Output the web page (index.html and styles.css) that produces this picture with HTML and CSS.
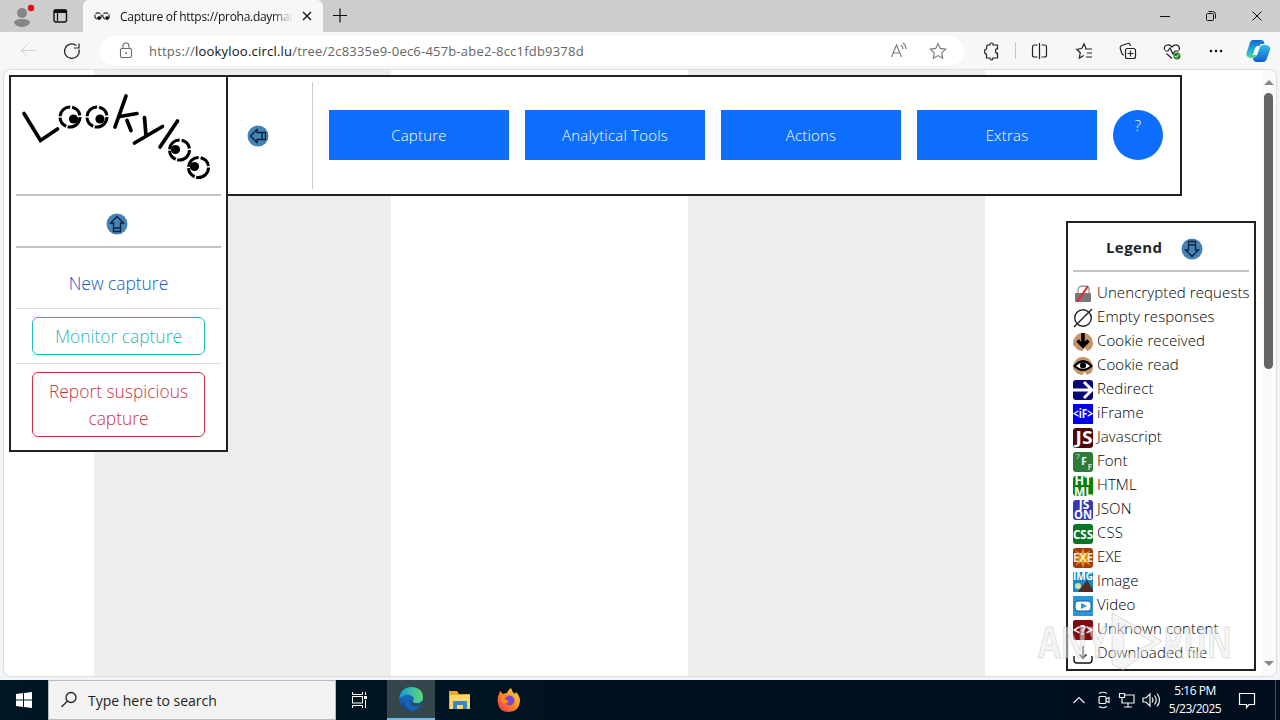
FILE: index.html
```html
<!DOCTYPE html>
<html lang="en">
<head>
<meta charset="utf-8">
<title>Capture of https://proha.daymar</title>
<link rel="stylesheet" href="styles.css">
</head>
<body>
<header class="tabstrip">
  <svg class="profile" width="82" height="32" viewBox="0 0 82 32"><circle cx="22" cy="13" r="5" fill="#858585"/><path d="M14 23q0-4 8-4t8 4q-3 4-8 4t-8-4" fill="#858585"/><circle cx="31" cy="8" r="3.2" fill="#e00b16"/><rect x="54" y="10" width="12.5" height="12" rx="2" fill="none" stroke="#111" stroke-width="1.4"/><path d="M54.500 10h11.500v2.500H54.500zM57.500 13v8" fill="#111" stroke="#111" stroke-width="1.200"/></svg>
  <div class="tab">
    <svg width="18" height="14" viewBox="0 0 18 14"><g fill="none" stroke="#333" stroke-width="1.300"><circle cx="5" cy="7" r="3.200" stroke-dasharray="5 1"/><circle cx="13" cy="7" r="3.200" stroke-dasharray="5 1"/></g><circle cx="6" cy="9" r="1.800"/><circle cx="14" cy="9" r="1.800"/></svg>
    <span class="tab-title">Capture of https://proha.daymar</span>
    <svg width="10" height="10" viewBox="0 0 10 10"><path d="M1 1l8 8M9 1l-8 8" stroke="#111" stroke-width="1.300"/></svg>
  </div>
  <svg class="plus" width="16" height="16" viewBox="0 0 16 16"><path d="M1 7.500h14M8 .5v14" stroke="#111" stroke-width="1.200"/></svg>
  <svg class="winbuttons" width="120" height="32" viewBox="0 0 120 32" fill="none" stroke="#111"><path d="M0 16.500h10M92.500 11.500l9 9M101.500 11.500l-9 9"/><rect x="46.500" y="13.500" width="7" height="7" rx="1"/><path d="M48.500 11.500h4q3 0 3 3v4"/></svg>
</header>
<div class="toolbar">
  <svg width="100" height="38" viewBox="0 0 100 38" fill="none"><path d="M36 18.500H21M27.500 12.500l-6.500 6 6.500 6" stroke="#d0d0d0"/><path d="M79 17.500A7.300 7.300 0 1 1 76.500 13.500M79 11.500v4.500h-5" stroke="#222" stroke-width="1.200"/></svg>
  <div class="address">
    <svg width="14" height="18" viewBox="0 0 14 18"><rect x="1.500" y="6.500" width="11" height="9" rx="1.500" fill="none" stroke="#666" stroke-width="1.100"/><path d="M4 6V4q0-3 3-3t3 3v2" fill="none" stroke="#666" stroke-width="1.100"/><circle cx="7" cy="11" r=".8"/></svg>
    <span class="url">https://<b>lookyloo.circl.lu</b>/tree/2c8335e9-0ec6-457b-abe2-8cc1fdb9378d</span>
    <svg class="address-icons" width="62" height="20" viewBox="0 0 62 20" fill="none" stroke="#777" stroke-width="1.100"><path d="M1.500 16L6.500 4l5 12M3.500 12h6M11 4q2 1.500 2 4M13 2q3 2 3 6"/><path d="M48 2.500l2.300 4.900 5.400.7-4 3.800 1 5.300-4.700-2.600-4.700 2.600 1-5.300-4-3.800 5.400-.7z"/></svg>
  </div>
  <svg class="actions" width="304" height="38" viewBox="976 32 304 38" fill="none" stroke="#222" stroke-width="1.200">
    <path d="M987 45h3q-.5-2 1.500-2t1.500 2h4.500v4q-2-.5-2 2t2 2v5h-4.500q0 2-1.500 2t-1.500-2h-3.500v-4q-2 0-2-2.500t2-2.500z"/>
    <path d="M1015.500 42v17" stroke="#c5c5c5" stroke-width="1"/>
    <path d="M1037.500 45h-3q-2 0-2 2v8q0 2 2 2h3M1041.500 45h3q2 0 2 2v8q0 2-2 2h-3M1039.500 43v16"/>
    <path d="M1086 48.500l-2-4.500-2.300 4.500-5 .8 3.600 3.400-1 5.300 4.500-2.500M1085 49h7M1087 53h5M1086 57h6"/>
    <rect x="1125.500" y="48.500" width="10" height="10" rx="2"/><path d="M1130.500 50.500v6M1127.500 53.500h6M1124 55q-2 0-2.300-2l-1.500-5q-.3-1.700 1.500-2.500l6-2q2-.5 3 2.500"/>
    <path d="M1164.500 50q-1-4 2.500-5 3-.8 5 2 3-3.500 6-1.500 2 1.500 1.200 4.500M1165 51h3l2-3 3 6 2-3h4M1166.500 53.500l5.500 5"/><circle cx="1177" cy="56" r="3.500" fill="#218321" stroke="none"/><path d="M1175 56l1.300 1.500 2.500-3" stroke="#fff" stroke-width="1"/>
    <g fill="#111" stroke="none"><circle cx="1211" cy="51" r="1.300"/><circle cx="1216" cy="51" r="1.300"/><circle cx="1221" cy="51" r="1.300"/></g>
    <defs><linearGradient id="cp1" x2="0" y2="1"><stop stop-color="#1764cc"/><stop offset=".5" stop-color="#21a6df"/><stop offset="1" stop-color="#58d592"/></linearGradient><linearGradient id="cp2" x2="0" y2="1"><stop stop-color="#2ac0e8"/><stop offset="1" stop-color="#155cd0"/></linearGradient></defs>
    <path d="M1253 40h8q3 0 3.500 4h-4l-4 12q-1 2-3 2h-3q-5-1-4-5l3-9q1-4 3.500-4" fill="url(#cp1)" stroke="none"/><path d="M1263 45h3q5 1 4 5l-3 8q-1 4-4 4h-7q-3-1-3-4 3 0 4-3l3-8q1-2 3-2" fill="url(#cp2)" stroke="none"/><path d="M1257 46h3l-3 9h-4l2-7z" fill="#fff" stroke="none"/>
  </svg>
</div>
<main class="viewport">
  <div class="bands"><i></i><i></i></div>
  <section class="menu">
    <div class="panel side">
      <svg class="logo" width="205" height="112" viewBox="16 81 205 112" fill="none" stroke="#000" stroke-width="3.700">
        <path d="M24 113.500L40.500 140.500L57.500 129" stroke-linecap="round"/>
        <g stroke-width="3" stroke-dasharray="18 1.500 11 1.500 15 2 11.830 2"><circle cx="70" cy="117" r="10"/><circle cx="97" cy="117" r="10"/><circle cx="179.500" cy="150" r="10"/><circle cx="198.500" cy="167.500" r="10"/></g>
        <g fill="#000" stroke="none"><circle cx="73.500" cy="119" r="4.600"/><circle cx="100" cy="119" r="4.600"/><circle cx="175.500" cy="149.500" r="4.600"/><circle cx="194.500" cy="166.500" r="4.600"/></g>
        <path d="M126 96l-11 31M120 116.500l17-3M127 120.500l4 10M144.500 117.500l1.500 18M162.500 126.500l-28 16.500M177.500 121l-17.500 26" stroke-linecap="round"/>
      </svg>
      <div class="collapse"><svg width="22" height="24" viewBox="0 0 22 24"><circle cx="11" cy="12" r="10.500" fill="#4682b4"/><path d="M11 4.500l6.500 6.500h-3v5h-7v-5h-3zM7.500 16h7v3.500h-7z" fill="none" stroke="#0a223b" stroke-width="1.300"/></svg></div>
      <div class="item first">New capture</div>
      <div class="item"><span class="btn cyan">Monitor capture</span></div>
      <div class="item last"><span class="btn red">Report suspicious capture</span></div>
    </div>
    <nav class="panel topnav">
      <div class="back"><svg width="24" height="22" viewBox="0 0 24 22"><circle cx="12" cy="11" r="10.500" fill="#4682b4"/><path d="M4.500 11l6.500-6.500v3h5v7h-5v3zM16 7.500h3.500v7H16z" fill="none" stroke="#0a223b" stroke-width="1.300"/></svg></div>
      <div class="nav-btn">Capture</div><div class="nav-btn">Analytical Tools</div><div class="nav-btn">Actions</div><div class="nav-btn">Extras</div>
      <div class="help">?</div>
    </nav>
  </section>
  <aside class="panel legend">
    <div class="legend-head"><b>Legend</b><svg width="22" height="24" viewBox="0 0 22 24"><circle cx="11" cy="12" r="10.500" fill="#4682b4"/><path d="M11 19.500l6.500-6.500h-3V8h-7v5h-3zM7.500 4.500h7V8h-7z" fill="none" stroke="#0a223b" stroke-width="1.300"/></svg></div>
    <ul>
      <li><svg class="ic" viewBox="0 0 20 20"><path d="M5 9V6q0-4 5.500-4T16 6v3" fill="none" stroke="#999" stroke-width="1.300"/><rect x="2" y="9" width="16" height="9" rx="1" fill="#777"/><path d="M4 18L15 2" stroke="#ef2335" stroke-width="2"/></svg><span>Unencrypted requests</span></li>
      <li><svg class="ic" viewBox="0 0 20 20"><circle cx="10" cy="10" r="8.300" fill="none" stroke="#212529" stroke-width="1.400"/><path d="M1 19L19 1" stroke="#212529" stroke-width="1.400"/></svg><span>Empty responses</span></li>
      <li><svg class="ic" viewBox="0 0 20 20"><path d="M0 13q-1-6 5-11 8-3 13 3 4 7 0 12l-4 2-2-3-3 3-4-1z" fill="#c69468"/><path d="M10 1v13M4.500 8.500L10 14l5.500-5.500" fill="none" stroke="#000" stroke-width="3.500"/></svg><span>Cookie received</span></li>
      <li><svg class="ic" viewBox="0 0 20 20"><path d="M0 13q-1-6 5-11 8-3 13 3 4 7 0 12l-4 2-2-3-3 3-4-1z" fill="#c69468"/><path d="M0 10q10-12 20 0-10 10-20 0" fill="#000"/><path d="M3 10q7-7 14 0-7 6-14 0" fill="#fff"/><circle cx="10" cy="9.500" r="3"/></svg><span>Cookie read</span></li>
      <li><svg class="ic" viewBox="0 0 20 20"><rect width="20" height="20" rx="3" fill="#080879"/><path d="M0 10h18M11 2l8 8-8 8" fill="none" stroke="#fff" stroke-width="3"/></svg><span>Redirect</span></li>
      <li><svg class="ic" viewBox="0 0 20 20"><rect width="20" height="20" fill="#0000f5"/><text x="10" y="14" font-size="12" textLength="20" lengthAdjust="spacingAndGlyphs">&lt;iF&gt;</text></svg><span>iFrame</span></li>
      <li><svg class="ic" viewBox="0 0 20 20"><rect width="20" height="20" rx="3" fill="#4b080b"/><text x="11" y="16" font-size="18" textLength="17" lengthAdjust="spacingAndGlyphs">JS</text></svg><span>Javascript</span></li>
      <li><svg class="ic" viewBox="0 0 20 20"><rect width="20" height="20" rx="3" fill="#2d7b36"/><text x="5" y="7" font-size="7" opacity=".5">7</text><text x="11" y="13" font-size="10">F</text><text x="17" y="18" font-size="8" opacity=".75">F</text></svg><span>Font</span></li>
      <li><svg class="ic" viewBox="0 0 20 20"><rect width="20" height="20" rx="3" fill="#078207"/><text x="10" y="9" font-size="12" textLength="17" lengthAdjust="spacingAndGlyphs">HT</text><text x="10" y="19.500" font-size="12" textLength="18" lengthAdjust="spacingAndGlyphs">ML</text></svg><span>HTML</span></li>
      <li><svg class="ic" viewBox="0 0 20 20"><rect width="20" height="20" rx="3" fill="#3939b5"/><text x="11" y="9" font-size="12">JS</text><text x="10" y="19" font-size="12" textLength="18" lengthAdjust="spacingAndGlyphs">ON</text></svg><span>JSON</span></li>
      <li><svg class="ic" viewBox="0 0 20 20"><rect width="20" height="20" rx="3" fill="#0b7628"/><text x="10" y="14.500" font-size="12.500" textLength="20" lengthAdjust="spacingAndGlyphs">CSS</text></svg><span>CSS</span></li>
      <li><svg class="ic" viewBox="0 0 20 20"><rect width="20" height="20" rx="3" fill="#a43a08"/><path d="M10 0l2 6 5-4-3 6 6 2-6 2 4 6-6-4-2 6-2-6-6 4 4-6-6-2 6-2-4-6 6 4z" fill="#eb9513"/><text x="10" y="14" font-size="12" textLength="20" lengthAdjust="spacingAndGlyphs" fill-opacity=".85">EXE</text></svg><span>EXE</span></li>
      <li><svg class="ic" viewBox="0 0 20 20"><rect width="20" height="20" fill="#168bc8"/><circle cx="5" cy="14" r="3" fill="#d7e49b"/><path d="M5 20l9-12 6 10v2z" fill="#552b20"/><text x="10" y="8" font-size="10" textLength="20" lengthAdjust="spacingAndGlyphs">IMG</text></svg><span>Image</span></li>
      <li><svg class="ic" viewBox="0 0 20 20"><rect width="20" height="20" fill="#2497df"/><rect x="2" y="5" width="16" height="10" rx="3" fill="#fff" stroke="#175984"/><path d="M8 7l6 3-6 3z" fill="#2497df"/></svg><span>Video</span></li>
      <li><svg class="ic" viewBox="0 0 20 20"><rect width="20" height="20" rx="2" fill="#810a0d"/><text x="10" y="14.500" font-size="14" textLength="20" lengthAdjust="spacingAndGlyphs">&lt;?&gt;</text></svg><span>Unknown content</span></li>
      <li><svg class="ic" viewBox="0 0 20 20" fill="none" stroke="#111" stroke-width="1.400"><path d="M1 12v4q0 3 3 3h12q3 0 3-3v-4M10 2v12M6.500 10.500L10 14l3.500-3.500"/></svg><span>Downloaded file</span></li>
    </ul>
  </aside>
  <div class="scrollbar"><i class="up"></i><i class="thumb"></i><i class="down"></i></div>
</main>
<svg class="watermark" width="200" height="60" viewBox="1036 612 200 60"><g class="wm-text"><text x="1038" y="658" textLength="70" lengthAdjust="spacingAndGlyphs">ANY</text><text x="1163" y="658" textLength="69" lengthAdjust="spacingAndGlyphs">RUN</text></g><path d="M1112 613l50 28-39 29-11-6zM1124 626v31l29-15z" fill="#ececec" fill-opacity=".5" fill-rule="evenodd" stroke="#999" stroke-opacity=".3"/></svg>
<footer class="taskbar">
  <div class="start"><svg width="16" height="16" viewBox="0 0 16 16"><path d="M0 2l7-1v6.500H0zM8 .9L16 0v7.500H8zM0 8.500h7V15l-7-1zM8 8.500h8V16l-8-1z" fill="#fff"/></svg></div>
  <div class="search"><svg width="16" height="18" viewBox="0 0 16 18"><circle cx="10" cy="6.500" r="5" fill="none" stroke="#222" stroke-width="1.300"/><path d="M6.500 10L.5 16" stroke="#222" stroke-width="1.300"/></svg><span>Type here to search</span></div>
  <div class="app"><svg width="18" height="16" viewBox="0 0 18 16" fill="none" stroke="#fff"><path d="M1.500 0v2.500h10V0M1.500 16v-2.500h10V16M14.500 0v3M14.500 8v8"/><rect x="1.500" y="4.500" width="10" height="6.500"/><path d="M13 5.500h3" stroke-width="3"/></svg></div>
  <div class="app active"><svg width="24" height="24" viewBox="0 0 24 24"><defs><linearGradient id="e1"><stop stop-color="#159bd8"/><stop offset="1" stop-color="#5edb72"/></linearGradient><linearGradient id="e2" x2="0" y2="1"><stop stop-color="#1688d4"/><stop offset="1" stop-color="#123f91"/></linearGradient></defs><circle cx="12" cy="12" r="11.800" fill="url(#e2)"/><path d="M.3 11Q2 0 13 0q11 1 11 10 0 6-7 6-4 0-3-2 2-3-1-5-5-4-12.700 2" fill="url(#e1)"/><path d="M13 9q-5 3-2 8 4 5 11 1-3 5-9 6-8-3-7-9 1-6 7-6" fill="#1664b5"/><path d="M14 14q0 3 4 3.500 3 0 6-2v2l-2 .5q-5 2-9-1-1-1 1-3" fill="#34474c"/></svg></div>
  <div class="app"><svg width="22" height="20" viewBox="0 0 22 20"><path d="M0 1h8l2 3h11v15H0z" fill="#e9a927"/><path d="M1 5h20v14H1z" fill="#ffd667"/><path d="M4 19v-7q0-1 1-1h12q1 0 1 1v7h-4v-4H8v4z" fill="#3888c6"/></svg></div>
  <div class="app"><svg width="24" height="24" viewBox="0 0 24 24"><defs><linearGradient id="ff" x1="1" y1="0" x2="0" y2="1"><stop stop-color="#ffe64b"/><stop offset=".5" stop-color="#ff8a20"/><stop offset="1" stop-color="#ef265c"/></linearGradient></defs><path d="M2 6l1-3 3 3q2-1 4-1 1-3 4-5 1 4 4 6l1-2q4 4 4 9-1 11-11 11T1 15q-1-5 1-9" fill="url(#ff)"/><circle cx="12.500" cy="12.500" r="5" fill="#7549d3"/><path d="M4 7q4-1 7 2-4 0-4 2 3 0 5 3-5 4-8-1z" fill="#ff8a20"/></svg></div>
  <svg class="tray" width="92" height="24" viewBox="0 0 92 24" fill="none" stroke="#eee" stroke-width="1.200"><path d="M1.500 15L7 9.500l5.500 5.500"/><rect x="27" y="8.500" width="7" height="7" rx="1"/><path d="M34 11l3-1.500v5L34 13M27 5.500q4-2.500 8 0M27 18.500q4 2.500 8 0"/><path d="M53 7h9v8H50v-4M56 15v4M52 19h8M47.500 5.500h5v4h-5zM50 9.500v3"/><path d="M71 10h3l4-4v12l-4-4h-3zM80 9.500q2 2.500 0 5M82.500 7.500q3.500 4.500 0 9M85 5.500q5 6.500 0 13"/></svg>
  <div class="clock"><span>5:16 PM</span><span>5/23/2025</span></div>
  <svg class="note" width="18" height="18" viewBox="0 0 18 18"><path d="M1.500 2.500h15v11H11l-2.500 3v-3h-7z" fill="none" stroke="#fff" stroke-width="1.200"/></svg>
  <i class="peek"></i>
</footer>
</body>
</html>
```
FILE: styles.css
```css
* { box-sizing: border-box; }
body { margin: 0; width: 1280px; height: 720px; overflow: hidden; display: flex; flex-direction: column; background: #f0f3f7; font-family: "Open Sans", "Noto Sans", sans-serif; color: #212529; }
svg { display: block; flex: none; }
.tabstrip { height: 32px; background: #cdcdcd; display: flex; align-items: center; flex: none; }
.profile { margin-right: 1px; }
.tab { width: 240px; height: 32px; padding-left: 10px; background: #f7f7f7; border-radius: 6px 6px 0 0; display: flex; align-items: center; gap: 9px; font-size: 12px; color: #111; }
.tab-title { width: 173px; overflow: hidden; white-space: nowrap; letter-spacing: -.28px; -webkit-mask-image: linear-gradient(90deg, #000 88%, transparent); mask-image: linear-gradient(90deg, #000 88%, transparent); }
.plus { margin-left: 9px; }
.winbuttons { margin-left: auto; }
.toolbar { height: 38px; background: #f7f7f7; display: flex; align-items: center; flex: none; }
.address { width: 864px; height: 30px; border-radius: 15px; background: #fff; display: flex; align-items: center; padding-left: 19px; }
.url { margin-left: 16px; font-size: 13px; color: #666; white-space: nowrap; letter-spacing: .21px; }
.url b { font-weight: 400; color: #111; }
.address-icons { margin: 0 12px 0 auto; }
.actions { margin-left: 12px; }
.viewport { width: 1272px; height: 606px; margin: 0 4px 4px; background: #fff; border-radius: 7px; position: relative; overflow: hidden; box-shadow: 0 0 0 1px #dedede; flex: none; }
.bands { display: flex; gap: 297px; height: 100%; padding-left: 90px; }
.bands i { width: 297px; background: #eee; }
.panel { border: 2px solid #212121; background: #fff; }
.menu { position: absolute; left: 5px; top: 5px; display: flex; align-items: flex-start; }
.side { width: 219px; height: 377px; padding: 4px 5px; }
.collapse { height: 54px; border: solid #c4c4c4; border-width: 2px 0; display: flex; justify-content: center; align-items: center; margin-top: 1px; padding: 6px 3px 0 0; }
.item { border-top: 1px solid #ddd; padding: 8px 16px 0; text-align: center; font-size: 17.4px; font-weight: 300; line-height: 27px; height: 55px; }
.item.first { border: 0; height: 60px; padding-top: 22px; color: #1559c8; }
.item.last { height: 82px; }
.btn { display: block; border: 1px solid; border-radius: 6px; padding: 5px 8px 4px; }
.cyan { color: #24b9bd; }
.red { color: #c83445; }
.topnav { width: 956px; height: 121px; margin-left: -2px; padding: 5px 0 6px; display: flex; align-items: center; gap: 16px; }
.back { width: 85px; height: 107px; border-right: 1px solid #ccc; display: flex; align-items: center; padding: 2px 0 0 18px; }
.nav-btn { width: 180px; height: 50px; margin-bottom: 1px; background: #0d6efd; color: #fff; font-size: 15px; font-weight: 300; line-height: 51px; text-align: center; letter-spacing: .2px; }
.help { width: 50px; height: 50px; margin-bottom: 1px; border-radius: 50%; background: #0d6efd; color: #fff; font-size: 15px; font-weight: 300; line-height: 31px; text-align: center; }
.legend { position: absolute; left: 1062px; top: 151px; width: 190px; height: 450px; padding: 0 5px; }
.legend-head { height: 49px; border-bottom: 2px solid #c4c4c4; display: flex; align-items: center; gap: 19px; padding: 0 0 0 33px; font-size: 15px; letter-spacing: .4px; }
.legend-head svg { margin-top: 4px; }
.legend ul { list-style: none; margin: 8px 0 0; padding: 0; }
.legend li { height: 24px; display: flex; align-items: center; gap: 4px; font-size: 15px; font-weight: 300; white-space: nowrap; letter-spacing: .1px; color: #000; }
.ic { width: 20px; height: 20px; margin-top: 3px; }
.ic text { font-weight: 700; fill: #fff; text-anchor: middle; letter-spacing: 0; }
.scrollbar { position: absolute; right: 0; top: 0; width: 15px; height: 606px; background: #fafafa; display: flex; flex-direction: column; align-items: center; }
.scrollbar .up, .scrollbar .down { border: 5px solid transparent; }
.scrollbar .up { border-bottom-color: #888; border-top: 0; margin: 10px 0 8px; }
.thumb { width: 9px; height: 276px; border-radius: 5px; background: #656565; }
.scrollbar .down { border-top-color: #888; border-bottom: 0; margin: auto 0 10px; }
.watermark { position: absolute; left: 1036px; top: 612px; }
.wm-text { font: 700 43px "Open Sans", sans-serif; fill: #ececec; fill-opacity: .55; stroke: #999; stroke-opacity: .3; }
.taskbar { height: 40px; background: linear-gradient(90deg, #001622, #000e1e); display: flex; align-items: center; flex: none; }
.start { width: 48px; display: flex; justify-content: center; }
.search { width: 288px; height: 40px; background: #f2f2f2; border: 1px solid #bbb; padding-left: 12px; display: flex; align-items: center; gap: 11px; font-size: 14px; color: #222; }
.app { width: 49px; height: 40px; display: flex; align-items: center; justify-content: center; }
.app:nth-child(3) { width: 51px; padding-right: 3px; }
.active { width: 48px; background: #34474c; border-bottom: 2px solid #76b9ed; }
.tray { margin-left: auto; }
.clock { width: 66px; margin-left: -2px; color: #fff; font-size: 12px; line-height: 18px; display: flex; flex-direction: column; align-items: center; letter-spacing: -.5px; }
.note { margin-left: 10px; }
.peek { width: 1px; height: 40px; background: #45505c; margin: 0 4px 0 19px; }
```
